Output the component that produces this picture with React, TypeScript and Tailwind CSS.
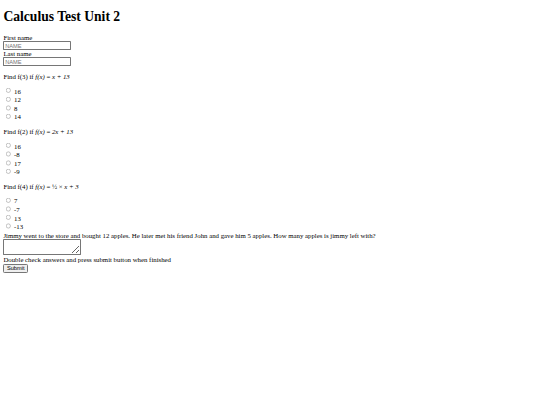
import React from "react";

function Radio({ name, label }: { name: string; label: string }) {
  return (
    <div className="h-[20.2px]">
      <input type="radio" name={name} className="mt-[3px] mr-[3px] ml-[5px] mb-0" />{" "}
      <label>{label}</label>
    </div>
  );
}

const inputCls =
  "w-[160px] h-[21px] border border-[#767676] rounded-[2px] px-[2px] py-[1px] text-[13.333px] font-['Liberation_Sans',sans-serif] placeholder:text-[#757575]";

export default function App() {
  return (
    <div className="[zoom:0.425] px-[8px] font-['Liberation_Serif',serif] text-[16px] leading-[normal] text-black">
      <h1 className="text-[32px] font-bold my-[21.44px]">Calculus Test Unit 2</h1>
      <form>
        <label>First name</label>
        <br />
        <input type="text" placeholder="NAME" className={inputCls} />
        <br />
        <label>Last name</label>
        <br />
        <input type="text" placeholder="NAME" className={inputCls} />
        <p className="my-[16px]">
          Find f(3) if <i>f(x)</i> = <i>x + 13</i>
        </p>
        <Radio name="q1" label="16" />
        <Radio name="q1" label="12" />
        <Radio name="q1" label="8" />
        <Radio name="q1" label="14" />
        <p className="my-[16px]">
          Find f(2) if <i>f(x)</i> = <i>2x + 13</i>
        </p>
        <Radio name="q2" label="16" />
        <Radio name="q2" label="-8" />
        <Radio name="q2" label="17" />
        <Radio name="q2" label="-9" />
        <p className="my-[16px]">
          Find f(4) if <i>f(x)</i> = ½ × <i>x + 3</i>
        </p>
        <Radio name="q3" label="7" />
        <Radio name="q3" label="-7" />
        <Radio name="q3" label="13" />
        <Radio name="q3" label="-13" />
        <div className="mt-[4px]">
          <label>
            Jimmy went to the store and bought 12 apples. He later met his friend John and gave him 5 apples. How many apples is jimmy left with?
          </label>
          <br />
          <textarea className="w-[182px] h-[36px] border border-[#767676] rounded-[2px] p-[2px] text-[13.333px] font-['Liberation_Mono',monospace] align-baseline" />
          <br />
          <label>Double check answers and press submit button when finished</label>
          <br />
          <button
            type="button"
            className="mt-[3px] border border-[#767676] rounded-[3px] bg-[#efefef] px-[6px] py-[1px] text-[13.333px] font-['Liberation_Sans',sans-serif]"
          >
            Submit
          </button>
        </div>
      </form>
    </div>
  );
}
